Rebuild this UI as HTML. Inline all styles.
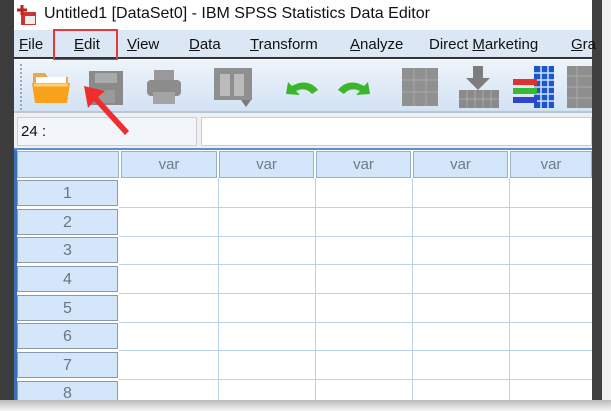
<!DOCTYPE html>
<html><head><style>
*{margin:0;padding:0;box-sizing:border-box}
body{width:611px;height:411px;overflow:hidden;background:#fff;font-family:"Liberation Sans","Noto Sans CJK SC",sans-serif;position:relative}
.abs{position:absolute}
.menu span{position:absolute;top:6px;font-size:15px;color:#111}
.rh{position:absolute;left:17px;width:101px;height:26px;background:#d4e6fa;border:1px solid #8a9aae;color:#6a7684;font-size:16px;text-align:center;line-height:25px}
.ch{position:absolute;top:151px;height:27px;background:#d4e6fa;border:1px solid #9ab0c8;color:#6f7c8a;font-size:15px;text-align:center;line-height:26px}
</style></head><body>
<div class="abs" style="left:0;top:0;width:14px;height:402px;background:#3c3c3c"></div>
<div class="abs" style="left:592px;top:0;width:10px;height:402px;background:#404040"></div>
<div class="abs" style="left:602px;top:0;width:9px;height:411px;background:#f2f2f2"></div>
<div class="abs" style="left:0;top:400px;width:611px;height:11px;background:linear-gradient(#bbb,#f5f5f5)"></div>
<div class="abs" style="left:14px;top:0;width:578px;height:30px;background:#fff"></div>
<svg class="abs" style="left:16px;top:4px" width="22" height="22"><rect x="5" y="8" width="15" height="13" fill="#c33"/><rect x="9" y="12" width="10" height="8" fill="#eee"/><path d="M1 6h10M6 1v10" stroke="#b22" stroke-width="3"/></svg>
<div class="abs" style="left:44px;top:5px;font-size:16px;color:#111">Untitled1 [DataSet0] - IBM SPSS Statistics Data Editor</div>
<div class="abs menu" style="left:14px;top:30px;width:578px;height:29px;background:#dbe7f5;border-bottom:2px solid #333">
<span style="left:5px"><u>F</u>ile</span>
<span style="left:60px"><u>E</u>dit</span>
<span style="left:113px"><u>V</u>iew</span>
<span style="left:175px"><u>D</u>ata</span>
<span style="left:236px"><u>T</u>ransform</span>
<span style="left:336px"><u>A</u>nalyze</span>
<span style="left:415px">Direct <u>M</u>arketing</span>
<span style="left:557px"><u>G</u>ra</span>
</div>
<div class="abs" style="left:53px;top:29px;width:65px;height:32px;border:2px solid #e03a3a"></div>
<div class="abs" style="left:14px;top:60px;width:578px;height:53px;background:linear-gradient(#eef4fb,#d3e2f3);border-bottom:2px solid #b9c6d4"></div>
<div class="abs" style="left:20px;top:64px;width:2px;height:46px;border-left:2px dotted #9ab"></div>
<svg class="abs" style="left:30px;top:67px" width="44" height="40"><path d="M3 6h12l3 4h20v8H3z" fill="#e9a84a"/><rect x="6" y="10" width="30" height="8" fill="#fff"/><path d="M2 16h38l-3 20H5z" fill="#f8a21c"/><path d="M4 18h34" stroke="#ffd27a" stroke-width="3"/></svg>
<svg class="abs" style="left:88px;top:70px" width="36" height="36"><rect x="1" y="1" width="34" height="34" fill="#8a8a8a"/><rect x="7" y="3" width="22" height="10" fill="#aaa"/><rect x="9" y="20" width="18" height="13" fill="#9a9a9a"/></svg>
<svg class="abs" style="left:145px;top:68px" width="38" height="38"><rect x="9" y="2" width="20" height="10" fill="#9a9a9a"/><rect x="2" y="12" width="34" height="16" rx="4" fill="#8c8c8c"/><rect x="8" y="24" width="22" height="12" fill="#a4a4a4"/></svg>
<svg class="abs" style="left:213px;top:67px" width="42" height="42"><rect x="1" y="1" width="38" height="32" fill="#8f8f8f"/><rect x="7" y="7" width="10" height="22" fill="#bbb"/><rect x="21" y="7" width="10" height="22" fill="#bbb"/><path d="M28 33l5 7 5-7z" fill="#7a7a7a"/></svg>
<svg class="abs" style="left:282px;top:76px" width="40" height="28"><path d="M4 18l2-12 4 4c10-6 20-4 26 4l-6 4c-4-5-10-6-16-3l4 4z" fill="#3bb52a"/></svg>
<svg class="abs" style="left:334px;top:76px" width="40" height="28"><path d="M36 18l-2-12-4 4c-10-6-20-4-26 4l6 4c4-5 10-6 16-3l-4 4z" fill="#3bb52a"/></svg>
<svg class="abs" style="left:402px;top:68px" width="38" height="40"><rect x="0" y="0" width="36" height="38" fill="#909090"/><path d="M0 12h36M0 24h36M12 0v38M24 0v38" stroke="#a8a8a8"/></svg>
<svg class="abs" style="left:459px;top:66px" width="40" height="42"><path d="M14 0h10v12h7L19 24 7 12h7z" fill="#7d7d7d"/><rect x="0" y="24" width="40" height="18" fill="#8a8a8a"/><path d="M0 33h40M8 24v18M16 24v18M24 24v18M32 24v18" stroke="#aaa"/></svg>
<svg class="abs" style="left:512px;top:66px" width="44" height="42"><rect x="22" y="0" width="20" height="42" fill="#1c57c8"/><path d="M22 7h20M22 14h20M22 21h20M22 28h20M22 35h20M29 0v42M36 0v42" stroke="#cfe0ff" stroke-width="1.5"/><rect x="1" y="13" width="24" height="6" fill="#d33"/><rect x="1" y="22" width="24" height="6" fill="#3b3"/><rect x="1" y="31" width="24" height="6" fill="#34c"/></svg>
<svg class="abs" style="left:567px;top:66px" width="25" height="42"><rect x="0" y="0" width="25" height="42" fill="#8e8e8e"/><path d="M0 10h25M0 21h25M0 32h25M10 0v42" stroke="#aaa"/></svg>
<div class="abs" style="left:14px;top:113px;width:578px;height:36px;background:#f0f0f0"></div>
<div class="abs" style="left:17px;top:117px;width:180px;height:29px;background:#f2f6fb;border:1px solid #ccd;font-size:15px;line-height:28px;padding-left:3px;color:#111">24 :</div>
<div class="abs" style="left:201px;top:117px;width:391px;height:29px;background:#fff;border:1px solid #ccc"></div>
<svg class="abs" style="left:78px;top:80px" width="56" height="58"><path d="M6 6L27 11 20 17 51 51 47 55 16 21 10 28z" fill="#ee2e2e"/></svg>
<div class="abs" style="left:14px;top:148px;width:578px;height:252px;background:#fff;border-top:2px solid #5b8fd0"></div>
<div class="abs" style="left:14px;top:150px;width:3px;height:250px;background:#3b6fb8"></div>
<div class="ch" style="left:17px;width:102px"></div>
<div class="ch" style="left:121px;width:96px">var</div>
<div class="ch" style="left:219px;width:95px">var</div>
<div class="ch" style="left:316px;width:95px">var</div>
<div class="ch" style="left:413px;width:95px">var</div>
<div class="ch" style="left:510px;width:82px">var</div>
<svg class="abs" style="left:119px;top:178px" width="473" height="222">
<g stroke="#b9d3ec" stroke-width="1">
<path d="M99.5 0v222M196.5 0v222M293.5 0v222M390.5 0v222"/>
<path d="M0 29.5h473M0 58.5h473M0 86.5h473M0 115.5h473M0 144.5h473M0 172.5h473M0 201.5h473"/>
</g></svg>
<div class="rh" style="top:180px">1</div>
<div class="rh" style="top:209px">2</div>
<div class="rh" style="top:237px">3</div>
<div class="rh" style="top:266px">4</div>
<div class="rh" style="top:295px">5</div>
<div class="rh" style="top:323px">6</div>
<div class="rh" style="top:352px">7</div>
<div class="rh" style="top:381px;height:19px;line-height:23px;overflow:hidden;border-bottom:none">8</div>
</body></html>
